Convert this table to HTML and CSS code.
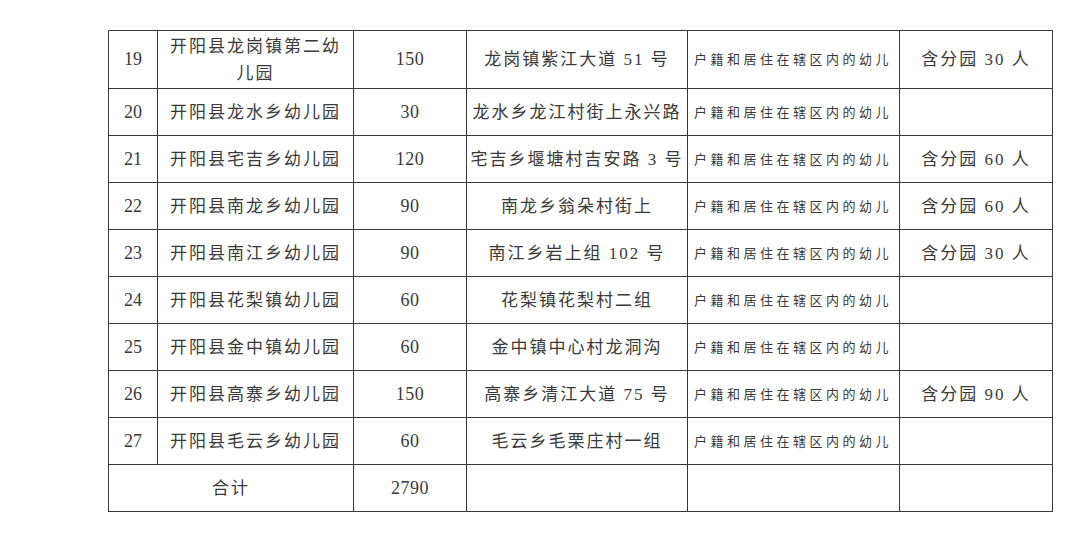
FILE: index.html
```html
<!DOCTYPE html>
<html lang="zh">
<head>
<meta charset="utf-8">
<link rel="stylesheet" href="styles.css">
</head>
<body>
<table class="grid">
  <colgroup>
    <col class="c-no"><col class="c-name"><col class="c-num"><col class="c-addr"><col class="c-scope"><col class="c-note">
  </colgroup>
  <tr class="tall">
    <td class="no">19</td><td class="name">开阳县龙岗镇第二幼儿园</td><td class="num">150</td>
    <td class="addr">龙岗镇紫江大道 51 号</td><td class="scope">户籍和居住在辖区内的幼儿</td><td class="note">含分园 30 人</td>
  </tr>
  <tr>
    <td class="no">20</td><td class="name">开阳县龙水乡幼儿园</td><td class="num">30</td>
    <td class="addr">龙水乡龙江村街上永兴路</td><td class="scope">户籍和居住在辖区内的幼儿</td><td class="note"></td>
  </tr>
  <tr>
    <td class="no">21</td><td class="name">开阳县宅吉乡幼儿园</td><td class="num">120</td>
    <td class="addr">宅吉乡堰塘村吉安路 3 号</td><td class="scope">户籍和居住在辖区内的幼儿</td><td class="note">含分园 60 人</td>
  </tr>
  <tr>
    <td class="no">22</td><td class="name">开阳县南龙乡幼儿园</td><td class="num">90</td>
    <td class="addr">南龙乡翁朵村街上</td><td class="scope">户籍和居住在辖区内的幼儿</td><td class="note">含分园 60 人</td>
  </tr>
  <tr>
    <td class="no">23</td><td class="name">开阳县南江乡幼儿园</td><td class="num">90</td>
    <td class="addr">南江乡岩上组 102 号</td><td class="scope">户籍和居住在辖区内的幼儿</td><td class="note">含分园 30 人</td>
  </tr>
  <tr>
    <td class="no">24</td><td class="name">开阳县花梨镇幼儿园</td><td class="num">60</td>
    <td class="addr">花梨镇花梨村二组</td><td class="scope">户籍和居住在辖区内的幼儿</td><td class="note"></td>
  </tr>
  <tr>
    <td class="no">25</td><td class="name">开阳县金中镇幼儿园</td><td class="num">60</td>
    <td class="addr">金中镇中心村龙洞沟</td><td class="scope">户籍和居住在辖区内的幼儿</td><td class="note"></td>
  </tr>
  <tr>
    <td class="no">26</td><td class="name">开阳县高寨乡幼儿园</td><td class="num">150</td>
    <td class="addr">高寨乡清江大道 75 号</td><td class="scope">户籍和居住在辖区内的幼儿</td><td class="note">含分园 90 人</td>
  </tr>
  <tr>
    <td class="no">27</td><td class="name">开阳县毛云乡幼儿园</td><td class="num">60</td>
    <td class="addr">毛云乡毛栗庄村一组</td><td class="scope">户籍和居住在辖区内的幼儿</td><td class="note"></td>
  </tr>
  <tr>
    <td class="total" colspan="2">合计</td><td class="num">2790</td>
    <td></td><td></td><td></td>
  </tr>
</table>
</body>
</html>
```

FILE: styles.css
```css
html, body {
  margin: 0;
  padding: 0;
  background: #ffffff;
}

body {
  padding: 30px 0 0 108px;
  font-family: "Liberation Serif", "Noto Sans CJK SC", serif;
  color: #3a3a3a;
}

.grid {
  border-collapse: collapse;
  table-layout: fixed;
  width: 944px;
}

.c-no { width: 49px; }
.c-name { width: 196px; }
.c-num { width: 113px; }
.c-addr { width: 221px; }
.c-scope { width: 212px; }
.c-note { width: 153px; }

.grid td {
  border: 1px solid #3a3a3a;
  height: 46px;
  padding: 0 8px;
  text-align: center;
  vertical-align: middle;
  font-size: 17px;
  line-height: 27px;
  letter-spacing: 2px;
  white-space: normal;
}

.grid tr.tall td {
  height: 57px;
}

.grid td.no {
  padding: 0;
  letter-spacing: 0;
  font-size: 18px;
}

.grid td.num {
  font-size: 18px;
  letter-spacing: 0.5px;
}

.grid td.name {
  padding: 0 10px;
}

.grid td.addr {
  padding: 0 2px;
  white-space: nowrap;
}

.grid td.scope {
  font-size: 13px;
  letter-spacing: 3.5px;
  padding: 0 2px 0 6px;
  text-align: left;
  white-space: nowrap;
}

.grid td.note {
  letter-spacing: 2px;
}

.grid td.total {
  letter-spacing: 2px;
}
```
